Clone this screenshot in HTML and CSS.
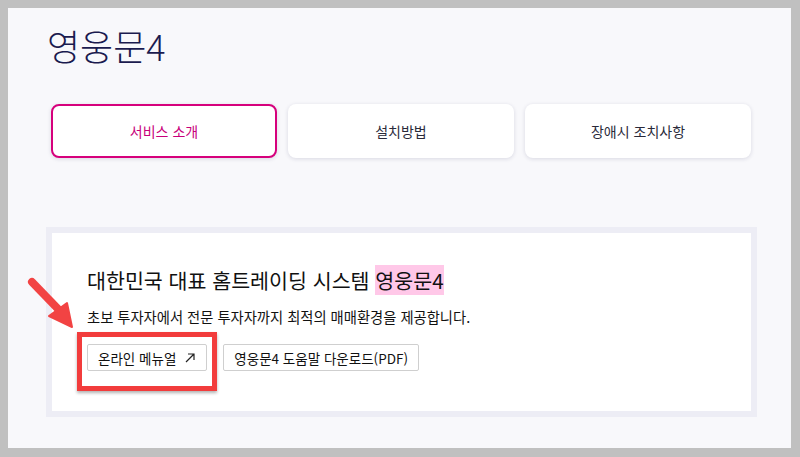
FILE: index.html
```html
<!DOCTYPE html>
<html lang="ko">
<head>
<meta charset="utf-8">
<link rel="stylesheet" href="styles.css">
</head>
<body>
<div class="frame">
  <h1 class="title">영웅문4</h1>
  <nav class="tabs">
    <div class="tab active">서비스 소개</div>
    <div class="tab">설치방법</div>
    <div class="tab">장애시 조치사항</div>
  </nav>
  <section class="card">
    <div class="card-inner">
      <h2 class="heading">대한민국 대표 홈트레이딩 시스템 <span class="mark">영웅문4</span></h2>
      <p class="desc">초보 투자자에서 전문 투자자까지 최적의 매매환경을 제공합니다.</p>
      <div class="buttons">
        <a class="btn">온라인 메뉴얼 <svg class="ext" width="12" height="12" viewBox="0 0 12 12"><path d="M2 10 L10 2 M4 2 H10 V8" fill="none" stroke="#222" stroke-width="1.2"/></svg></a>
        <a class="btn">영웅문4 도움말 다운로드(PDF)</a>
      </div>
    </div>
  </section>
  <div class="redbox"></div>
  <svg class="arrow" width="70" height="70" viewBox="0 0 70 70">
    <path d="M17 14 L45 43" stroke="#f24343" stroke-width="8" stroke-linecap="round" fill="none"/>
    <polygon points="57,59 34,48 52,35" fill="#f24343" stroke="#f24343" stroke-width="2" stroke-linejoin="round"/>
  </svg>
</div>
</body>
</html>
```

FILE: styles.css
```css
html, body {
  margin: 0;
  padding: 0;
}
body {
  background: #c0c0c0;
  font-family: "Noto Sans CJK KR", "Noto Sans", sans-serif;
}
.frame {
  position: relative;
  margin: 8px 9px 0 8px;
  width: 783px;
  height: 440px;
  background: #f8f8fb;
  box-sizing: border-box;
  padding: 14px 0 0 38px;
}
.title {
  margin: 0 0 0 1px;
  font-size: 36px;
  font-weight: 300;
  line-height: 46px;
  color: #1b1b4f;
  letter-spacing: 0;
}
.tabs {
  display: flex;
  gap: 11px;
  margin: 36px 0 0 5px;
}
.tab {
  width: 226px;
  height: 54px;
  box-sizing: border-box;
  display: flex;
  align-items: center;
  justify-content: center;
  background: #fff;
  border-radius: 8px;
  box-shadow: 0 1px 4px rgba(30, 30, 80, 0.14);
  font-size: 14px;
  color: #2a2a3a;
}
.tab.active {
  border: 2px solid #d6007c;
  color: #c8007a;
}
.card {
  margin: 69px 0 0 0;
  width: 711px;
  height: 190px;
  box-sizing: border-box;
  border: 6px solid #ededf5;
  background: #fff;
}
.card-inner {
  padding: 33px 0 0 35px;
}
.heading {
  margin: 0;
  font-size: 20.6px;
  font-weight: 400;
  line-height: 28px;
  color: #111;
  letter-spacing: 0;
}
.mark {
  background: #ffc8e8;
}
.desc {
  margin: 13px 0 0 0;
  font-size: 14.3px;
  line-height: 20px;
  color: #111;
  letter-spacing: 0;
}
.buttons {
  display: flex;
  gap: 16px;
  margin-top: 17px;
}
.btn {
  display: flex;
  align-items: center;
  gap: 6px;
  height: 27px;
  box-sizing: border-box;
  padding: 0 10px;
  border: 1px solid #cfcfcf;
  border-radius: 2px;
  background: #fff;
  font-size: 13.5px;
  color: #111;
  letter-spacing: 0;
}
.ext {
  margin-left: 2px;
}
.redbox {
  position: absolute;
  left: 69px;
  top: 324px;
  width: 140px;
  height: 59px;
  box-sizing: border-box;
  border: 5px solid #f23c3c;
  box-shadow: 0 2px 3px rgba(0, 0, 0, 0.3);
}
.arrow {
  position: absolute;
  left: 7px;
  top: 260px;
}
```
